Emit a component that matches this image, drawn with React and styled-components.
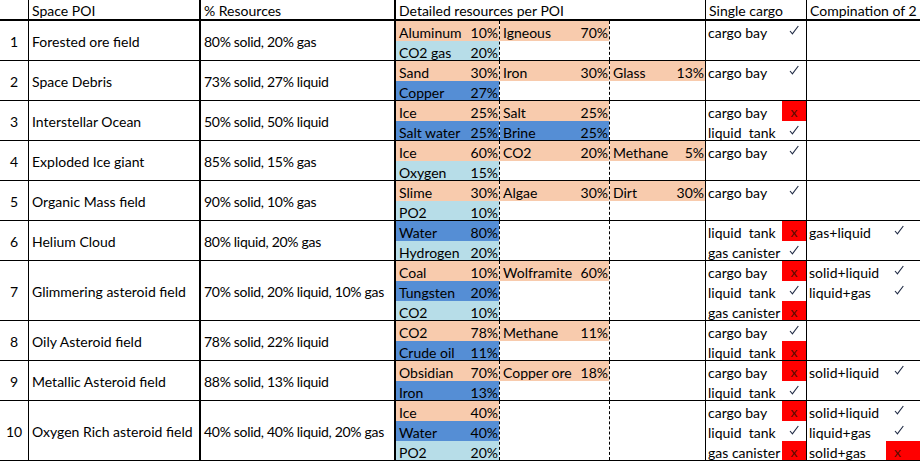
import React from 'react';
import styled, { createGlobalStyle } from 'styled-components';

const GlobalStyle = createGlobalStyle`
  html, body {
    margin: 0;
    padding: 0;
    background: #ffffff;
  }
  body {
    font-family: Lato, "Liberation Sans", Arial, sans-serif;
    font-size: 14px;
    color: #000;
  }
`;

const COLS = '29px 172px 195px 104px 110px 96px 101px 1fr';

const COLORS = {
  o: '#f8cbad',
  b: '#558ed5',
  l: '#b7dde8',
  red: '#ff0000',
};

const Sheet = styled.div`
  width: 920px;
  height: 462px;
  overflow: hidden;
`;

const HeaderRow = styled.div`
  display: grid;
  grid-template-columns: ${COLS};
  height: 21px;
  border-bottom: 2px solid #000;
  box-sizing: border-box;
`;

const HeadCell = styled.div`
  padding: 2px 0 0 3px;
  line-height: 17px;
  white-space: nowrap;
  box-sizing: border-box;
  border-right: ${(p) => p.$border || 'none'};
`;

const Row = styled.div`
  display: grid;
  grid-template-columns: ${COLS};
  height: ${(p) => p.$lines * 20}px;
  border-bottom: 1px solid #000;
  box-sizing: border-box;
`;

const Cell = styled.div`
  box-sizing: border-box;
  border-right: ${(p) => p.$border || 'none'};
  overflow: hidden;
  display: flex;
  flex-direction: column;
`;

const CenterCell = styled(Cell)`
  justify-content: center;
  padding-left: ${(p) => (p.$center ? '0' : '3px')};
  padding-top: 2px;
  align-items: ${(p) => (p.$center ? 'center' : 'flex-start')};
  white-space: nowrap;
  letter-spacing: ${(p) => (p.$tight ? '-0.3px' : 'normal')};
`;

const Line = styled.div`
  flex: 0 0 20px;
  height: 20px;
  padding-top: 3px;
  line-height: 17px;
  box-sizing: border-box;
  display: flex;
  white-space: pre;
  background: ${(p) => (p.$bg ? COLORS[p.$bg] : 'transparent')};
`;

const ItemName = styled.span`
  flex: 1;
  padding-left: 3px;
`;

const ItemPct = styled.span`
  padding-right: 1px;
`;

const CargoName = styled.span`
  flex: 0 0 ${(p) => p.$w}px;
  padding-left: 2px;
  box-sizing: border-box;
`;

const Mark = styled.span`
  flex: ${(p) => (p.$fill ? '1' : '0 0 24px')};
  margin-top: -3px;
  height: 20px;
  display: flex;
  align-items: center;
  justify-content: ${(p) => (p.$fill ? 'flex-start' : 'center')};
  padding-left: ${(p) => (p.$fill ? '8px' : '0')};
  background: ${(p) => (p.$bad ? COLORS.red : 'transparent')};
  color: #5a0d00;
  font-size: 14px;
`;

const Check = () => (
  <svg width="10" height="10" viewBox="0 0 10 10" style={{ marginTop: -3 }}>
    <path d="M1 6 L3.4 8.8 L9.3 1" fill="none" stroke="#1f2a44" strokeWidth="1.1" />
  </svg>
);

const pois = [
  {
    n: 1, name: 'Forested ore field', res: '80% solid, 20% gas',
    detail: [
      [['Aluminum', '10%', 'o'], ['Igneous', '70%', 'o']],
      [['CO2 gas', '20%', 'l']],
    ],
    single: [['cargo bay', 1]],
    combo: [],
  },
  {
    n: 2, name: 'Space Debris', res: '73% solid, 27% liquid',
    detail: [
      [['Sand', '30%', 'o'], ['Iron', '30%', 'o'], ['Glass', '13%', 'o']],
      [['Copper', '27%', 'b']],
    ],
    single: [['cargo bay', 1]],
    combo: [],
  },
  {
    n: 3, name: 'Interstellar Ocean', res: '50% solid, 50% liquid',
    detail: [
      [['Ice', '25%', 'o'], ['Salt', '25%', 'o']],
      [['Salt water', '25%', 'b'], ['Brine', '25%', 'b']],
    ],
    single: [['cargo bay', 0], ['liquid  tank', 1]],
    combo: [],
  },
  {
    n: 4, name: 'Exploded Ice giant', res: '85% solid, 15% gas',
    detail: [
      [['Ice', '60%', 'o'], ['CO2', '20%', 'o'], ['Methane', '5%', 'o']],
      [['Oxygen', '15%', 'l']],
    ],
    single: [['cargo bay', 1]],
    combo: [],
  },
  {
    n: 5, name: 'Organic Mass field', res: '90% solid, 10% gas',
    detail: [
      [['Slime', '30%', 'o'], ['Algae', '30%', 'o'], ['Dirt', '30%', 'o']],
      [['PO2', '10%', 'l']],
    ],
    single: [['cargo bay', 1]],
    combo: [],
  },
  {
    n: 6, name: 'Helium Cloud', res: '80% liquid, 20% gas',
    detail: [
      [['Water', '80%', 'b']],
      [['Hydrogen', '20%', 'l']],
    ],
    single: [['liquid  tank', 0], ['gas canister', 1]],
    combo: [['gas+liquid', 1]],
  },
  {
    n: 7, name: 'Glimmering asteroid field', res: '70% solid, 20% liquid, 10% gas',
    detail: [
      [['Coal', '10%', 'o'], ['Wolframite', '60%', 'o']],
      [['Tungsten', '20%', 'b']],
      [['CO2', '10%', 'l']],
    ],
    single: [['cargo bay', 0], ['liquid  tank', 1], ['gas canister', 0]],
    combo: [['solid+liquid', 1], ['liquid+gas', 1]],
  },
  {
    n: 8, name: 'Oily Asteroid field', res: '78% solid, 22% liquid',
    detail: [
      [['CO2', '78%', 'o'], ['Methane', '11%', 'o']],
      [['Crude oil', '11%', 'b']],
    ],
    single: [['cargo bay', 1], ['liquid  tank', 0]],
    combo: [],
  },
  {
    n: 9, name: 'Metallic Asteroid field', res: '88% solid, 13% liquid',
    detail: [
      [['Obsidian', '70%', 'o'], ['Copper ore', '18%', 'o']],
      [['Iron', '13%', 'b']],
    ],
    single: [['cargo bay', 0], ['liquid  tank', 1]],
    combo: [['solid+liquid', 1]],
  },
  {
    n: 10, name: 'Oxygen Rich asteroid field', res: '40% solid, 40% liquid, 20% gas',
    detail: [
      [['Ice', '40%', 'o']],
      [['Water', '40%', 'b']],
      [['PO2', '20%', 'l']],
    ],
    single: [['cargo bay', 0], ['liquid  tank', 1], ['gas canister', 0]],
    combo: [['solid+liquid', 1], ['liquid+gas', 1], ['solid+gas', 0]],
  },
];

const SOLID = '1px solid #000';
const THICK = '2px solid #000';
const DASH = '1px dashed #000';

function DetailColumn({ poi, col, border }) {
  return (
    <Cell $border={border}>
      {poi.detail.map((line, i) => {
        const item = line[col];
        return (
          <Line key={i} $bg={item ? item[2] : null}>
            {item && (
              <>
                <ItemName>{item[0]}</ItemName>
                <ItemPct>{item[1]}</ItemPct>
              </>
            )}
          </Line>
        );
      })}
    </Cell>
  );
}

function CargoColumn({ entries, width, fill, border }) {
  return (
    <Cell $border={border}>
      {entries.map(([label, ok], i) => (
        <Line key={i}>
          <CargoName $w={width}>{label}</CargoName>
          <Mark $bad={!ok} $fill={fill}>{ok ? <Check /> : 'x'}</Mark>
        </Line>
      ))}
    </Cell>
  );
}

export default function App() {
  return (
    <Sheet>
      <GlobalStyle />
      <HeaderRow>
        <HeadCell $border={SOLID} />
        <HeadCell $border={THICK}>Space POI</HeadCell>
        <HeadCell $border={THICK}>% Resources</HeadCell>
        <HeadCell style={{ gridColumn: 'span 3' }} $border={SOLID}>
          Detailed resources per POI
        </HeadCell>
        <HeadCell $border={SOLID}>Single cargo</HeadCell>
        <HeadCell>Compination of 2</HeadCell>
      </HeaderRow>
      {pois.map((poi) => (
        <Row key={poi.n} $lines={poi.detail.length}>
          <CenterCell $border={SOLID} $center>{poi.n}</CenterCell>
          <CenterCell $border={THICK}>{poi.name}</CenterCell>
          <CenterCell $border={THICK} $tight>{poi.res}</CenterCell>
          <DetailColumn poi={poi} col={0} border={DASH} />
          <DetailColumn poi={poi} col={1} border={DASH} />
          <DetailColumn poi={poi} col={2} border={SOLID} />
          <CargoColumn entries={poi.single} width={76} border={SOLID} />
          <CargoColumn entries={poi.combo} width={79} fill />
        </Row>
      ))}
    </Sheet>
  );
}
